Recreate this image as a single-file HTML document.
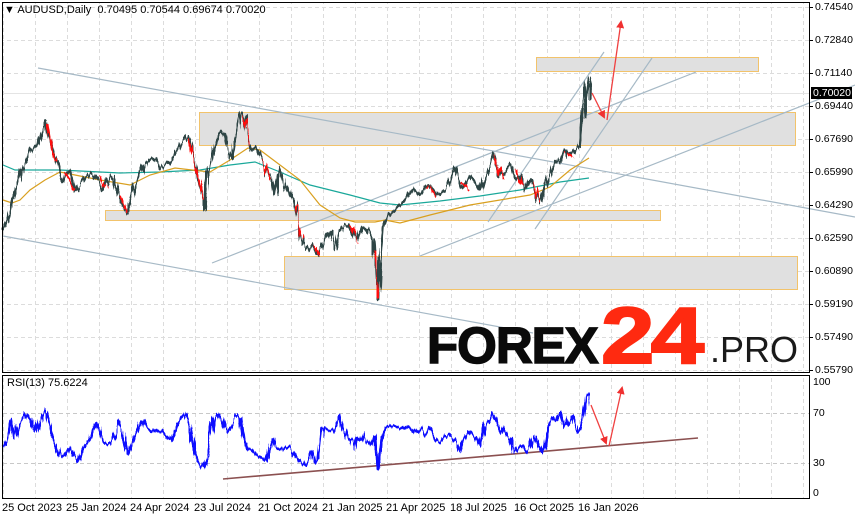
<!DOCTYPE html>
<html><head><meta charset="utf-8"><style>
body{margin:0;background:#fff;width:855px;height:521px;overflow:hidden;position:relative;font-family:"Liberation Sans",sans-serif}
.t{position:absolute;font-size:10.5px;color:#000;white-space:nowrap}
</style></head><body>
<svg width="855" height="521" style="position:absolute;left:0;top:0" xmlns="http://www.w3.org/2000/svg">
<defs>
<pattern id="vg" x="3" y="0" width="32" height="521" patternUnits="userSpaceOnUse"><line x1="0.5" y1="0" x2="0.5" y2="521" stroke="#dcdcdc" stroke-dasharray="4,3"/></pattern>
<pattern id="hg" x="0" y="7" width="855" height="33" patternUnits="userSpaceOnUse"><line x1="0" y1="0.5" x2="855" y2="0.5" stroke="#dcdcdc" stroke-dasharray="4,3"/></pattern>
<marker id="ah" markerWidth="8" markerHeight="8" refX="6" refY="4" orient="auto" markerUnits="userSpaceOnUse"><path d="M0,0 L8,4 L0,8 z" fill="#f03030"/></marker>
<filter id="jag" x="-5%" y="-10%" width="110%" height="120%"><feTurbulence type="fractalNoise" baseFrequency="0.35 0.02" numOctaves="2" seed="3"/><feDisplacementMap in="SourceGraphic" scale="9" xChannelSelector="R" yChannelSelector="G"/></filter>
</defs>
<rect x="3" y="3" width="806" height="369" fill="url(#vg)"/>
<rect x="3" y="3" width="806" height="369" fill="url(#hg)"/>
<rect x="3" y="376" width="806" height="122" fill="url(#vg)"/>
<line x1="3" y1="413.5" x2="809" y2="413.5" stroke="#c8c8c8" stroke-dasharray="4,3"/>
<line x1="3" y1="463.5" x2="809" y2="463.5" stroke="#c8c8c8" stroke-dasharray="4,3"/>
<g fill="#e0e0e0" stroke="#f2c36b" stroke-width="1">
<rect x="536.5" y="57.5" width="222" height="14"/>
<rect x="199.5" y="112.5" width="596" height="33"/>
<rect x="105.5" y="210.5" width="555" height="10"/>
<rect x="284.5" y="256.5" width="513" height="33"/>
</g>
<line x1="3" y1="93.5" x2="809" y2="93.5" stroke="#e4e4e4"/>
<g stroke="#a6b9c6" stroke-width="1.2" fill="none">
<line x1="38" y1="68" x2="855" y2="217"/>
<line x1="3" y1="236" x2="533" y2="333"/>
<line x1="212" y1="263" x2="696" y2="72"/>
<line x1="420" y1="256" x2="855" y2="85"/>
<line x1="488" y1="222" x2="604" y2="52"/>
<line x1="535" y1="229" x2="652" y2="58"/>
</g>
<polyline fill="none" stroke="#1aa89a" stroke-width="1.2" points="3,165 15,170 40,170 60,170 120,173 160,172 200,170 230,165 255,162 280,172 310,185 350,195 380,203 400,205 440,201 480,196 520,190 560,182 589,178"/>
<polyline fill="none" stroke="#d9a020" stroke-width="1.2" points="3,200 12,203 20,200 30,190 45,180 60,172 75,175 100,180 130,185 150,175 175,168 192,170 210,172 230,160 248,148 260,150 280,165 300,180 320,205 340,218 355,222 375,222 385,220 400,223 430,215 450,210 470,205 500,200 530,195 550,187 570,170 589,158"/>
<g filter="url(#jag)">
<polyline fill="none" stroke="#2f4545" stroke-width="2.6" stroke-linejoin="bevel" points="3,230 8,218 12,200 18,185 22,170 27,160 30,150 38,145 42,132 46,122 50,140 54,155 58,165 62,182 66,175 72,170 76,192 80,185 85,178 92,172 98,180 103,190 108,180 112,175 118,195 126,212 130,200 135,185 140,178 145,165 150,160 155,158 160,168 165,165 172,160 176,152 180,145 184,140 188,135 192,150 195,160 198,175 202,190 205,212 208,175 212,160 216,140 220,130 225,135 228,150 232,160 236,130 240,112 244,115 248,140 252,150 256,148 262,160 268,175 272,175 275,195 280,165 285,185 290,195 294,200 298,220 302,240 306,250 312,245 318,255 325,240 330,232 335,250 340,230 345,225 350,225 356,240 362,225 368,230 374,240 376,280 378,300 380,260 383,225 388,215 395,210 400,205 405,200 412,188 420,195 428,185 438,195 445,190 450,182 455,167 462,188 470,175 480,190 488,168 494,153 500,175 505,170 510,165 515,180 520,175 525,190 530,180 535,192 540,205 543,195 548,180 555,160 560,165 565,150 570,155 575,150 580,145 583,115 585,95 588,77 590,85 590,100"/>
<g stroke="#ff1010" stroke-width="2" fill="none">
<polyline points="48,125 52,150 56,162"/><polyline points="64,172 70,178 75,190"/><polyline points="100,175 106,188"/><polyline points="120,195 126,210"/>
<polyline points="188,138 194,160 200,180 204,200"/><polyline points="244,118 250,145"/><polyline points="262,158 270,180"/><polyline points="296,205 302,238"/>
<polyline points="314,245 320,255"/><polyline points="352,226 357,242"/><polyline points="375,250 378,298"/><polyline points="428,186 436,196"/><polyline points="462,182 470,190"/><polyline points="494,155 502,178"/><polyline points="516,170 522,185"/><polyline points="532,182 540,203"/><polyline points="566,152 572,158"/>
</g>
</g>
<g stroke="#f04040" stroke-width="1.3" fill="none">
<line x1="592" y1="93" x2="604" y2="117" marker-end="url(#ah)"/>
<line x1="607" y1="120" x2="621" y2="22" marker-end="url(#ah)"/>
</g>
<line x1="223" y1="479" x2="698" y2="438" stroke="#8b5050" stroke-width="1.6"/>
<polyline filter="url(#jag)" fill="none" stroke="#1010ff" stroke-width="2.6" stroke-linejoin="bevel" points="3,447 6,440 10,420 14,440 18,425 22,420 26,413 30,420 35,433 40,418 45,410 50,432 55,445 60,455 65,455 70,447 74,455 78,460 82,450 86,445 92,438 97,422 100,430 105,442 110,445 115,435 118,420 122,430 128,455 133,440 138,430 142,420 146,428 150,428 156,432 162,430 168,438 172,440 177,425 182,418 186,412 190,427 194,450 198,462 203,466 207,458 210,440 214,418 218,413 222,418 227,432 232,425 237,415 241,418 244,440 248,450 252,450 256,455 260,458 265,462 270,448 273,438 276,448 280,450 285,447 290,448 295,455 300,462 304,465 308,460 312,450 315,462 318,460 322,428 326,428 330,430 334,430 340,415 344,430 348,440 352,440 355,450 357,438 360,440 363,430 366,440 371,445 375,435 377,465 379,470 381,440 385,428 390,425 395,427 400,428 405,430 410,428 415,432 420,428 425,435 430,428 436,440 440,442 445,436 450,435 456,442 460,452 464,440 470,433 475,437 480,445 485,425 490,420 493,413 497,420 500,428 505,435 510,440 514,453 518,448 522,445 526,452 530,447 534,435 538,445 542,453 545,445 548,425 552,416 556,420 560,413 564,428 568,425 572,415 576,428 580,432 584,415 587,395 589,395"/>
<g stroke="#f04040" stroke-width="1.3" fill="none">
<line x1="591" y1="405" x2="606" y2="443" marker-end="url(#ah)"/>
<line x1="609" y1="446" x2="622" y2="388" marker-end="url(#ah)"/>
</g>
<g stroke="#000" stroke-width="1" fill="none">
<rect x="2.5" y="2.5" width="807" height="370"/>
<rect x="2.5" y="375.5" width="807" height="123"/>
</g>
<g stroke="#000">
<line x1="809" y1="7.5" x2="813" y2="7.5"/><line x1="809" y1="40.5" x2="813" y2="40.5"/><line x1="809" y1="73.5" x2="813" y2="73.5"/><line x1="809" y1="106.5" x2="813" y2="106.5"/><line x1="809" y1="139.5" x2="813" y2="139.5"/><line x1="809" y1="172.5" x2="813" y2="172.5"/><line x1="809" y1="205.5" x2="813" y2="205.5"/><line x1="809" y1="238.5" x2="813" y2="238.5"/><line x1="809" y1="271.5" x2="813" y2="271.5"/><line x1="809" y1="304.5" x2="813" y2="304.5"/><line x1="809" y1="337.5" x2="813" y2="337.5"/><line x1="809" y1="370.5" x2="813" y2="370.5"/>
</g>
<rect x="811" y="87" width="41" height="12" fill="#000"/>
</svg>
<div class="t" style="left:4px;top:4px;font-size:11px">&#9660; AUDUSD,Daily&nbsp; 0.70495 0.70544 0.69674 0.70020</div>
<div class="t" style="left:7px;top:377px;font-size:11px">RSI(13) 75.6224</div>
<div class="t" style="left:815px;top:1px">0.74540</div>
<div class="t" style="left:815px;top:34px">0.72840</div>
<div class="t" style="left:815px;top:67px">0.71140</div>
<div class="t" style="left:813px;top:87px;color:#fff">0.70020</div>
<div class="t" style="left:815px;top:100px">0.69440</div>
<div class="t" style="left:815px;top:133px">0.67690</div>
<div class="t" style="left:815px;top:166px">0.65990</div>
<div class="t" style="left:815px;top:199px">0.64290</div>
<div class="t" style="left:815px;top:232px">0.62590</div>
<div class="t" style="left:815px;top:265px">0.60890</div>
<div class="t" style="left:815px;top:298px">0.59190</div>
<div class="t" style="left:815px;top:331px">0.57490</div>
<div class="t" style="left:815px;top:364px">0.55790</div>
<div class="t" style="left:813px;top:376px">100</div>
<div class="t" style="left:813px;top:407px">70</div>
<div class="t" style="left:813px;top:457px">30</div>
<div class="t" style="left:813px;top:487px">0</div>
<div class="t" style="left:2px;top:502px;font-size:11px">25 Oct 2023</div>
<div class="t" style="left:66px;top:502px;font-size:11px">25 Jan 2024</div>
<div class="t" style="left:130px;top:502px;font-size:11px">24 Apr 2024</div>
<div class="t" style="left:194px;top:502px;font-size:11px">23 Jul 2024</div>
<div class="t" style="left:258px;top:502px;font-size:11px">21 Oct 2024</div>
<div class="t" style="left:322px;top:502px;font-size:11px">21 Jan 2025</div>
<div class="t" style="left:386px;top:502px;font-size:11px">21 Apr 2025</div>
<div class="t" style="left:450px;top:502px;font-size:11px">18 Jul 2025</div>
<div class="t" style="left:514px;top:502px;font-size:11px">16 Oct 2025</div>
<div class="t" style="left:578px;top:502px;font-size:11px">16 Jan 2026</div>
<div style="position:absolute;left:427px;top:318px;font:bold 51px 'Liberation Sans',sans-serif;color:#0a0a0a;line-height:56px;letter-spacing:-1px;-webkit-text-stroke:1.5px #0a0a0a">FOREX</div>
<div style="position:absolute;left:601px;top:294px;font:bold 80px 'Liberation Sans',sans-serif;color:#ff2a10;line-height:84px;transform:scaleX(1.2);transform-origin:left top;letter-spacing:-3px;-webkit-text-stroke:2px #ff2a10">24</div>
<div style="position:absolute;left:710px;top:330px;font:36px 'Liberation Sans',sans-serif;color:#1a1a1a;line-height:40px">.PRO</div>
</body></html>
